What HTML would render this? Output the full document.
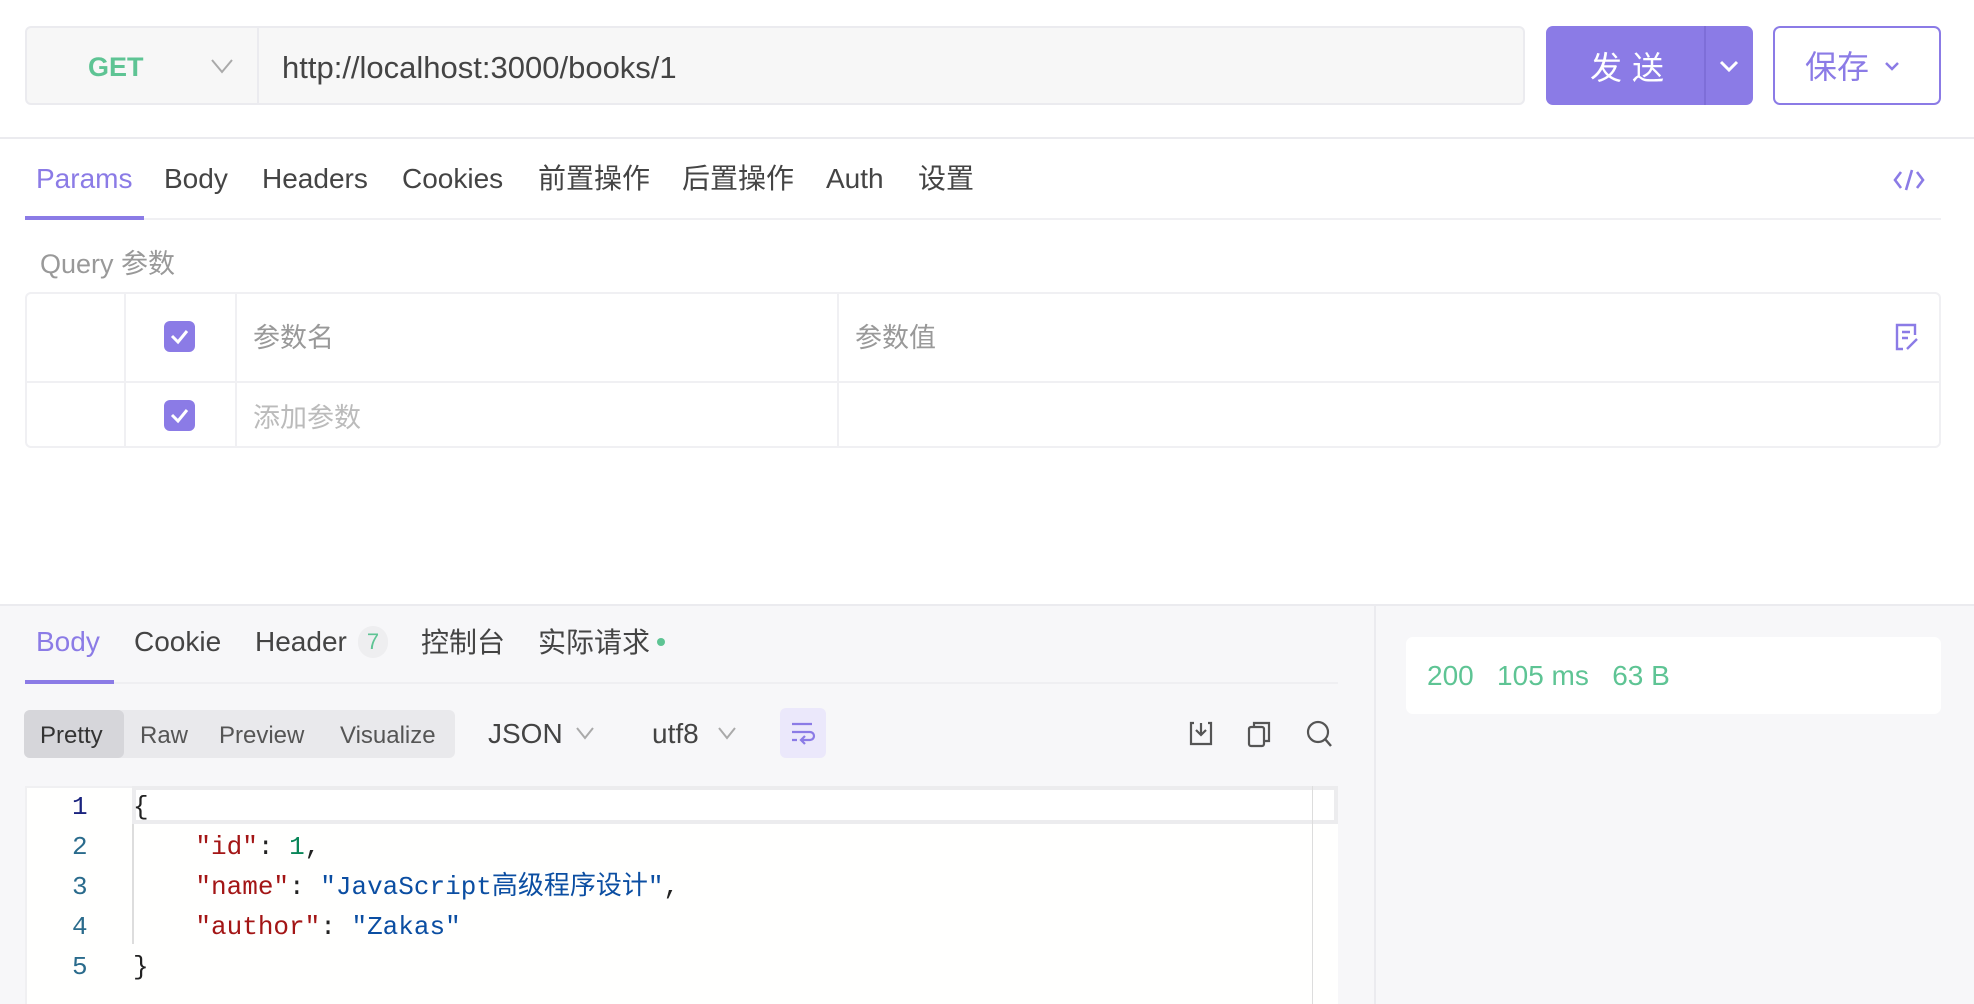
<!DOCTYPE html>
<html><head><meta charset="utf-8"><style>
*{box-sizing:border-box;margin:0;padding:0}
body{width:1974px;height:1004px;overflow:hidden;background:#fff;font-family:"Liberation Sans","Noto Sans CJK SC",sans-serif;color:#333;position:relative}
.a{position:absolute}
.cb{position:absolute;width:31px;height:31px;border-radius:6px;background:#8b7be6}
.cb svg{position:absolute;left:6px;top:7px}
.code{font-family:"Liberation Mono","Noto Sans CJK SC",monospace;font-size:26px;position:absolute;white-space:pre}
</style></head><body>
<!-- URL bar -->
<div class="a" style="left:25px;top:26px;width:1500px;height:79px;background:#f7f7f7;border:2px solid #ebebef;border-radius:6px"></div>
<div class="a" style="left:257px;top:28px;width:2px;height:75px;background:#ebebef"></div>
<div class="a" style="left:88px;top:52px;font-size:27px;font-weight:bold;color:#5ec494">GET</div>
<svg class="a" style="left:210px;top:58px" width="24" height="16"><path d="M2 2 L12 14 L22 2" fill="none" stroke="#aaa" stroke-width="2"/></svg>
<div class="a" style="left:282px;top:50px;font-size:31px;color:#444">http://localhost:3000/books/1</div>
<!-- send -->
<div class="a" style="left:1546px;top:26px;width:207px;height:79px;background:#8b7be6;border-radius:7px"></div>
<div class="a" style="left:1704px;top:26px;width:2px;height:79px;background:#7e6ed8"></div>
<div class="a" style="left:1590px;top:43px;font-size:32px;color:#fff;letter-spacing:10px">发送</div>
<svg class="a" style="left:1718px;top:58px" width="22" height="16"><path d="M3 4 L11 12 L19 4" fill="none" stroke="#fff" stroke-width="3"/></svg>
<div class="a" style="left:1773px;top:26px;width:168px;height:79px;border:2px solid #8b7be6;border-radius:7px"></div>
<div class="a" style="left:1805px;top:42px;font-size:32px;color:#8b7be6">保存</div>
<svg class="a" style="left:1883px;top:60px" width="18" height="14"><path d="M3 3 L9 9 L15 3" fill="none" stroke="#8b7be6" stroke-width="2.5"/></svg>
<div class="a" style="left:0;top:137px;width:1974px;height:2px;background:#ebebef"></div>
<!-- tabs -->
<div class="a" style="top:163px;left:36px;font-size:28px;color:#8b7be6">Params</div>
<div class="a" style="top:163px;left:164px;font-size:28px;color:#444">Body</div>
<div class="a" style="top:163px;left:262px;font-size:28px;color:#444">Headers</div>
<div class="a" style="top:163px;left:402px;font-size:28px;color:#444">Cookies</div>
<div class="a" style="top:157px;left:538px;font-size:28px;color:#444">前置操作</div>
<div class="a" style="top:157px;left:682px;font-size:28px;color:#444">后置操作</div>
<div class="a" style="top:163px;left:826px;font-size:28px;color:#444">Auth</div>
<div class="a" style="top:157px;left:918px;font-size:28px;color:#444">设置</div>
<svg class="a" style="left:1893px;top:168px" width="32" height="24"><path d="M8 4 L2 12 L8 20 M24 4 L30 12 L24 20 M19 2 L13 22" fill="none" stroke="#8b7be6" stroke-width="2.6"/></svg>
<div class="a" style="left:25px;top:218px;width:1916px;height:2px;background:#f0f0f3"></div>
<div class="a" style="left:25px;top:216px;width:119px;height:4px;background:#8b7be6"></div>
<div class="a" style="left:40px;top:246px;font-size:27px;color:#999;line-height:36px">Query 参数</div>
<!-- table -->
<div class="a" style="left:25px;top:292px;width:1916px;height:156px;border:2px solid #f0f0f3;border-radius:6px"></div>
<div class="a" style="left:25px;top:381px;width:1916px;height:2px;background:#f0f0f3"></div>
<div class="a" style="left:124px;top:292px;width:2px;height:156px;background:#f0f0f3"></div>
<div class="a" style="left:235px;top:292px;width:2px;height:156px;background:#f0f0f3"></div>
<div class="a" style="left:837px;top:292px;width:2px;height:156px;background:#f0f0f3"></div>
<div class="cb" style="left:164px;top:321px"><svg width="19" height="17"><path d="M2 8 L8 14 L17 3" fill="none" stroke="#fff" stroke-width="3"/></svg></div>
<div class="cb" style="left:164px;top:400px"><svg width="19" height="17"><path d="M2 8 L8 14 L17 3" fill="none" stroke="#fff" stroke-width="3"/></svg></div>
<div class="a" style="left:253px;top:316px;font-size:27px;color:#999">参数名</div>
<div class="a" style="left:855px;top:316px;font-size:27px;color:#999">参数值</div>
<div class="a" style="left:253px;top:396px;font-size:27px;color:#bbb">添加参数</div>
<svg class="a" style="left:1895px;top:323px" width="24" height="28"><path d="M20 12 V2 H2 V26 H8 M7 9 H15 M7 15 H13 M12 26 L22 16" fill="none" stroke="#8b7be6" stroke-width="2.4"/></svg>
<!-- bottom -->
<div class="a" style="left:0;top:604px;width:1974px;height:400px;background:#f7f7f9;border-top:2px solid #ebebef"></div>
<div class="a" style="left:1374px;top:606px;width:2px;height:398px;background:#ebebef"></div>
<div class="a" style="top:626px;left:36px;font-size:28px;color:#8b7be6">Body</div>
<div class="a" style="top:626px;left:134px;font-size:28px;color:#444">Cookie</div>
<div class="a" style="top:626px;left:255px;font-size:28px;color:#444">Header</div>
<div class="a" style="top:626px;left:358px;width:30px;height:32px;border-radius:16px;background:#eeeef0;font-size:22px;color:#5ec494;text-align:center;line-height:32px">7</div>
<div class="a" style="top:621px;left:421px;font-size:28px;color:#444">控制台</div>
<div class="a" style="top:621px;left:538px;font-size:28px;color:#444">实际请求</div>
<div class="a" style="left:657px;top:638px;width:8px;height:8px;border-radius:4px;background:#5ec494"></div>
<div class="a" style="left:25px;top:682px;width:1313px;height:2px;background:#efeff2"></div>
<div class="a" style="left:25px;top:680px;width:89px;height:4px;background:#8b7be6"></div>
<div class="a" style="left:24px;top:710px;width:431px;height:48px;background:#e9e9ec;border-radius:6px"></div>
<div class="a" style="left:24px;top:710px;width:100px;height:48px;background:#d6d6da;border-radius:6px"></div>
<div class="a" style="left:40px;top:722px;font-size:24px;color:#333">Pretty</div>
<div class="a" style="left:140px;top:722px;font-size:24px;color:#555">Raw</div>
<div class="a" style="left:219px;top:722px;font-size:24px;color:#555">Preview</div>
<div class="a" style="left:340px;top:722px;font-size:24px;color:#555">Visualize</div>
<div class="a" style="left:488px;top:718px;font-size:28px;color:#444">JSON</div>
<svg class="a" style="left:575px;top:726px" width="20" height="14"><path d="M2 2 L10 12 L18 2" fill="none" stroke="#aaa" stroke-width="2"/></svg>
<div class="a" style="left:652px;top:718px;font-size:28px;color:#444">utf8</div>
<svg class="a" style="left:717px;top:726px" width="20" height="14"><path d="M2 2 L10 12 L18 2" fill="none" stroke="#aaa" stroke-width="2"/></svg>
<div class="a" style="left:780px;top:708px;width:46px;height:50px;background:#ebe8fb;border-radius:6px"></div>
<svg class="a" style="left:790px;top:720px" width="26" height="26"><path d="M2 4 H22 M2 12 H20 A4 4 0 0 1 20 20 H12 M15 16 L11 20 L15 24 M2 20 H7" fill="none" stroke="#8b7be6" stroke-width="2.2"/></svg>
<svg class="a" style="left:1188px;top:720px" width="26" height="28"><path d="M6 3 H3 V24 H23 V3 H20 M13 3 V15 M8 10 L13 15 L18 10" fill="none" stroke="#555" stroke-width="2.2"/></svg>
<svg class="a" style="left:1247px;top:720px" width="26" height="28"><rect x="2" y="7" width="15" height="19" rx="2" fill="none" stroke="#555" stroke-width="2.2"/><path d="M7 7 V3 H22 V21 H17" fill="none" stroke="#555" stroke-width="2.2"/></svg>
<svg class="a" style="left:1306px;top:720px" width="28" height="28"><circle cx="12" cy="12" r="10" fill="none" stroke="#555" stroke-width="2.2"/><path d="M19 19 L25 26" stroke="#555" stroke-width="2.4"/></svg>
<!-- editor -->
<div class="a" style="left:25px;top:786px;width:1313px;height:218px;background:#fffffe;border-left:2px solid #f0f0f2;border-top:2px solid #f0f0f2"></div>
<div class="a" style="left:132px;top:786px;width:1206px;height:38px;border:4px solid #ececee;background:#fff"></div>
<div class="a" style="left:1312px;top:786px;width:1px;height:218px;background:#ddd"></div>
<div class="a" style="left:132px;top:824px;width:2px;height:120px;background:#ddd"></div>
<div class="code" style="left:72px;top:787px;color:#1a237e;line-height:40px">1</div>
<div class="code" style="left:72px;top:827px;color:#2a6b8c;line-height:40px">2
3
4
5</div>
<div class="code" style="left:133px;top:787px;color:#222;line-height:40px">{
    <span style="color:#a31515">"id"</span>: <span style="color:#098658">1</span>,
    <span style="color:#a31515">"name"</span>: <span style="color:#0b4ea2">"JavaScript高级程序设计"</span>,
    <span style="color:#a31515">"author"</span>: <span style="color:#0b4ea2">"Zakas"</span>
}</div>
<!-- status -->
<div class="a" style="left:1406px;top:637px;width:535px;height:77px;background:#fff;border-radius:7px"></div>
<div class="a" style="left:1427px;top:660px;font-size:28px;color:#5ec494;white-space:pre">200   105 ms   63 B</div>
</body></html>
